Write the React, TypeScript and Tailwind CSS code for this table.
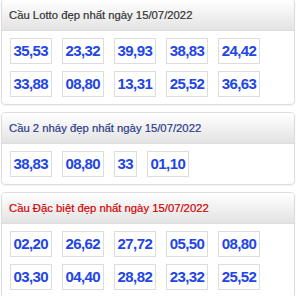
import React from "react";

const panels = [
  {
    title: "Cầu Lotto đẹp nhất ngày 15/07/2022",
    color: "text-[#333333]",
    nums: ["35,53", "23,32", "39,93", "38,83", "24,42", "33,88", "08,80", "13,31", "25,52", "36,63"],
  },
  {
    title: "Cầu 2 nháy đẹp nhất ngày 15/07/2022",
    color: "text-[#2b3a8c]",
    nums: ["38,83", "08,80", "33", "01,10"],
  },
  {
    title: "Cầu Đặc biệt đẹp nhất ngày 15/07/2022",
    color: "text-[#d40000]",
    nums: ["02,20", "26,62", "27,72", "05,50", "08,80", "03,30", "04,40", "28,82", "23,32", "25,52"],
  },
];

export default function App() {
  return (
    <div className="w-[300px] h-[296px] bg-white overflow-hidden" style={{ fontFamily: '"Liberation Sans", Arial, sans-serif' }}>
      <div className="flex flex-col gap-[7px] pl-[1px] mt-[-1px]">
        {panels.map((p) => (
          <div key={p.title} className="w-[294px] border border-[#dddddd] rounded-[4px] shadow-[0_1px_2px_rgba(0,0,0,0.06)] overflow-hidden">
            <div className={`h-[31px] flex items-center pl-[7px] text-[11.3px] [-webkit-text-stroke:0.2px_currentColor] border-b border-[#dddddd] bg-gradient-to-b from-[#ffffff] to-[#e3e3e3] ${p.color}`}>
              {p.title}
            </div>
            <div className="flex flex-wrap gap-x-[10.5px] gap-y-[7px] px-[8px] py-[7px]">
              {p.nums.map((n, i) => (
                <div key={i} className="h-[26px] px-[2.5px] border border-[#dddddd] flex items-center justify-center text-[15px] tracking-[-0.6px] font-bold text-[#2245e6]">
                  {n}
                </div>
              ))}
            </div>
          </div>
        ))}
      </div>
    </div>
  );
}
